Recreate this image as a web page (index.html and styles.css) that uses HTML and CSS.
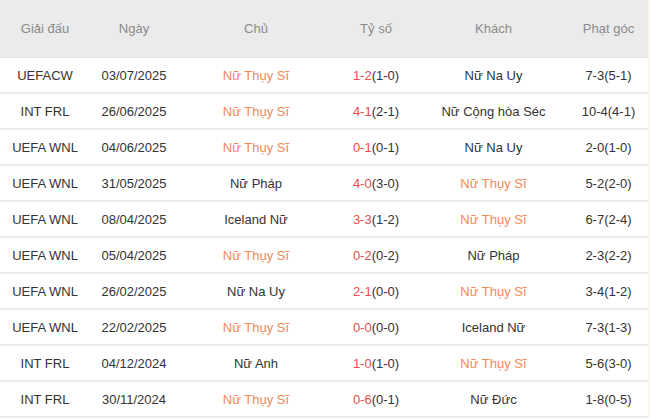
FILE: index.html
```html
<!DOCTYPE html>
<html lang="vi">
<head>
<meta charset="utf-8">
<link rel="stylesheet" href="styles.css">
</head>
<body>
<div class="tbl">
  <div class="row head">
    <div>Giải đấu</div><div>Ngày</div><div>Chủ</div><div>Tỷ số</div><div>Khách</div><div>Phạt góc</div>
  </div>
  <div class="row"><div>UEFACW</div><div>03/07/2025</div><div class="sw">Nữ Thụy Sĩ</div><div><span class="sc">1-2</span>(1-0)</div><div>Nữ Na Uy</div><div>7-3(5-1)</div></div>
  <div class="row"><div>INT FRL</div><div>26/06/2025</div><div class="sw">Nữ Thụy Sĩ</div><div><span class="sc">4-1</span>(2-1)</div><div>Nữ Cộng hòa Séc</div><div>10-4(4-1)</div></div>
  <div class="row"><div>UEFA WNL</div><div>04/06/2025</div><div class="sw">Nữ Thụy Sĩ</div><div><span class="sc">0-1</span>(0-1)</div><div>Nữ Na Uy</div><div>2-0(1-0)</div></div>
  <div class="row"><div>UEFA WNL</div><div>31/05/2025</div><div>Nữ Pháp</div><div><span class="sc">4-0</span>(3-0)</div><div class="sw">Nữ Thụy Sĩ</div><div>5-2(2-0)</div></div>
  <div class="row"><div>UEFA WNL</div><div>08/04/2025</div><div>Iceland Nữ</div><div><span class="sc">3-3</span>(1-2)</div><div class="sw">Nữ Thụy Sĩ</div><div>6-7(2-4)</div></div>
  <div class="row"><div>UEFA WNL</div><div>05/04/2025</div><div class="sw">Nữ Thụy Sĩ</div><div><span class="sc">0-2</span>(0-2)</div><div>Nữ Pháp</div><div>2-3(2-2)</div></div>
  <div class="row"><div>UEFA WNL</div><div>26/02/2025</div><div>Nữ Na Uy</div><div><span class="sc">2-1</span>(0-0)</div><div class="sw">Nữ Thụy Sĩ</div><div>3-4(1-2)</div></div>
  <div class="row"><div>UEFA WNL</div><div>22/02/2025</div><div class="sw">Nữ Thụy Sĩ</div><div><span class="sc">0-0</span>(0-0)</div><div>Iceland Nữ</div><div>7-3(1-3)</div></div>
  <div class="row"><div>INT FRL</div><div>04/12/2024</div><div>Nữ Anh</div><div><span class="sc">1-0</span>(1-0)</div><div class="sw">Nữ Thụy Sĩ</div><div>5-6(3-0)</div></div>
  <div class="row"><div>INT FRL</div><div>30/11/2024</div><div class="sw">Nữ Thụy Sĩ</div><div><span class="sc">0-6</span>(0-1)</div><div>Nữ Đức</div><div>1-8(0-5)</div></div>
</div>
</body>
</html>
```
FILE: styles.css
```css
html, body {
  margin: 0;
  padding: 0;
  background: #ffffff;
}
.tbl {
  width: 650px;
  font-family: "Liberation Sans", Arial, sans-serif;
  font-size: 13px;
  color: #333333;
  border-right: 2px solid #fdf8e4;
  box-sizing: border-box;
}
.row {
  display: grid;
  grid-template-columns: 90px 88px 156px 84px 151px 79px;
  height: 36px;
  border-bottom: 2px solid #ececec;
  box-sizing: border-box;
}
.row > div {
  display: flex;
  align-items: center;
  justify-content: center;
  white-space: nowrap;
}
.head {
  height: 58px;
  background: #ebebeb;
  color: #8a8a8a;
  border-bottom: 1px solid #e4e4e4;
}
.sw { color: #f0895a; }
.sc { color: #e84c4c; }
```
